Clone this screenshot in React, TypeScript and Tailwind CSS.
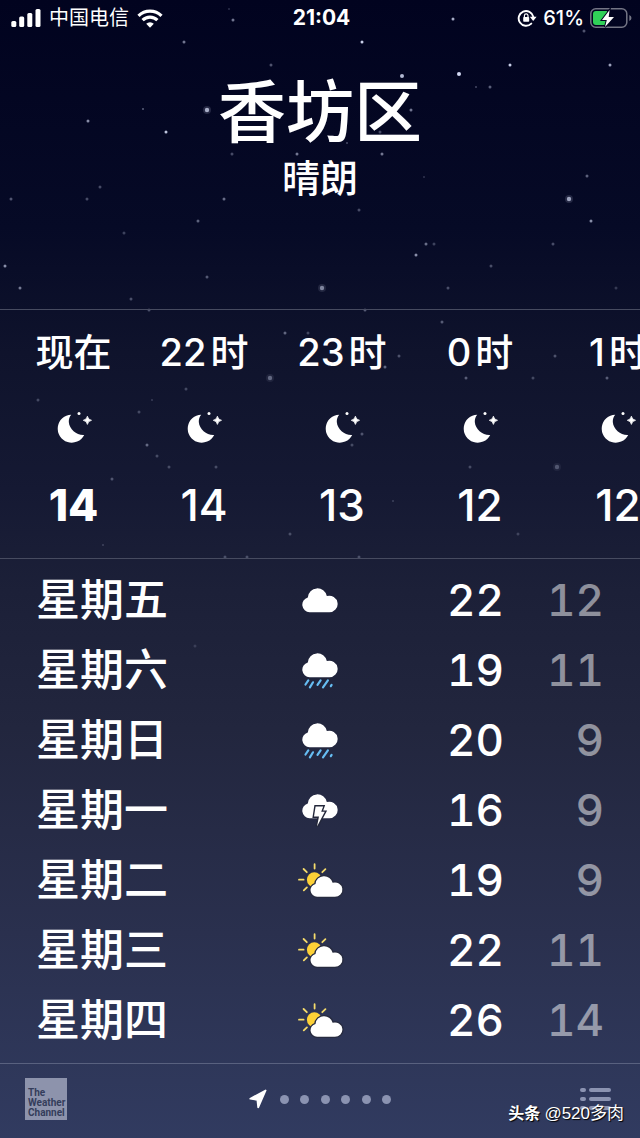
type Sky = "cloud" | "rain" | "storm" | "partly";

const hours = [
    { label: "现在", unit: "", temp: 14 },
    { label: "22", unit: "时", temp: 14 },
    { label: "23", unit: "时", temp: 13 },
    { label: "0", unit: "时", temp: 12 },
    { label: "1", unit: "时", temp: 12 },
];

const days: { name: string; sky: Sky; alt: string; high: number; low: number }[] = [
    { name: "星期五", sky: "cloud", alt: "多云", high: 22, low: 12 },
    { name: "星期六", sky: "rain", alt: "雨", high: 19, low: 11 },
    { name: "星期日", sky: "rain", alt: "雨", high: 20, low: 9 },
    { name: "星期一", sky: "storm", alt: "雷阵雨", high: 16, low: 9 },
    { name: "星期二", sky: "partly", alt: "晴间多云", high: 19, low: 9 },
    { name: "星期三", sky: "partly", alt: "晴间多云", high: 22, low: 11 },
    { name: "星期四", sky: "partly", alt: "晴间多云", high: 26, low: 14 },
];

// x, y, radius, opacity
const stars = [
    [229, 9, 1, 0.2], [233, 20, 1.5, 0.5], [453, 19, 1.5, 0.75], [584, 31, 1.5, 0.35],
    [184, 42, 1.5, 0.5], [362, 42, 1.5, 0.9], [271, 65, 1.5, 0.35], [510, 65, 1.5, 0.9],
    [610, 65, 1.5, 0.7], [459, 74, 2, 0.95], [402, 76, 2, 0.8], [476, 87, 1, 0.3],
    [490, 87, 1.5, 0.4], [143, 109, 1, 0.4], [411, 110, 1.5, 0.5], [88, 121, 1.5, 0.6],
    [166, 132, 1.5, 0.85], [380, 132, 1.5, 0.3], [347, 143, 1, 0.3], [232, 154, 1.5, 0.3],
    [297, 154, 1.5, 0.5], [382, 154, 1.5, 0.5], [424, 177, 1, 0.2], [587, 176, 1.5, 0.4],
    [100, 187, 1.5, 0.3], [11, 199, 1.5, 0.35], [87, 199, 1.5, 0.3], [224, 199, 1.5, 0.45],
    [359, 210, 1.5, 0.3], [198, 221, 1.5, 0.4], [591, 221, 1.5, 0.6], [124, 233, 1.5, 0.25],
    [426, 244, 1.5, 0.45], [434, 244, 1.5, 0.25], [553, 244, 1.5, 0.3], [416, 255, 1.5, 0.6],
    [5, 266, 1.5, 0.6], [491, 266, 1.5, 0.3], [207, 277, 1.5, 0.35], [20, 288, 1.5, 0.5],
    [448, 288, 1.5, 0.3], [616, 288, 1.5, 0.2], [131, 299, 1.5, 0.3], [149, 310, 1.5, 0.3],
    [365, 310, 1.5, 0.35], [442, 322, 1.5, 0.35], [285, 333, 1.5, 0.4], [308, 333, 1.5, 0.25],
    [399, 356, 1.5, 0.3], [555, 356, 1.5, 0.3], [385, 367, 1.5, 0.4], [466, 378, 1.5, 0.35],
    [533, 378, 1.5, 0.25], [607, 378, 1.5, 0.35], [186, 389, 1.5, 0.25], [38, 400, 1.5, 0.25],
    [152, 400, 1, 0.2], [139, 412, 1.5, 0.25], [362, 434, 1.5, 0.3], [352, 445, 1.5, 0.25],
    [147, 445, 1.5, 0.4], [157, 456, 1.5, 0.25], [169, 467, 1.5, 0.25], [216, 467, 1.5, 0.25],
    [470, 467, 1.5, 0.25], [112, 479, 1.5, 0.3], [393, 501, 1, 0.2], [290, 534, 1.5, 0.25],
    [518, 534, 1.5, 0.2], [103, 545, 1, 0.2], [225, 557, 1.5, 0.25], [247, 557, 1.5, 0.25],
    [359, 557, 1.5, 0.25], [195, 646, 1.5, 0.15],
];

const glowingStars = [
    [207, 110, 0.75], [569, 199, 0.7], [322, 288, 0.55], [270, 378, 0.4], [557, 467, 0.3],
];

const cloudPath =
    "M7.6 25.3 A7.6 7.6 0 0 1 5.8 10.4 A9.6 9.6 0 0 1 24.8 9.1 A8.3 8.3 0 1 1 27 25.3 Z";

function StarField() {
    return (
        <svg
            className="pointer-events-none absolute inset-0 h-full w-full"
            viewBox="0 0 640 1138"
            preserveAspectRatio="xMidYMin slice"
            fill="#dfe6ff"
            aria-hidden="true"
        >
            {stars.map(([x, y, r, o]) => (
                <circle key={`${x}-${y}`} cx={x} cy={y} r={r} opacity={o} />
            ))}
            {glowingStars.map(([x, y, o]) => (
                <g key={`${x}-${y}`} opacity={o}>
                    <circle cx={x} cy={y} r="4" opacity="0.2" />
                    <circle cx={x} cy={y} r="2.2" />
                </g>
            ))}
        </svg>
    );
}

function MoonIcon() {
    return (
        <svg width="32" height="32" viewBox="0 0 32 32" fill="#fff" className="overflow-visible" aria-hidden="true">
            <path d="M13.2 3.7 A14 14 0 1 0 26.2 24 C19 24.6 11.4 18.6 10.8 11 C10.700 8.200 11.600 5.700 13.200 3.700 Z" />
            <path d="M29.400 5.200 Q30 8.700 33.500 9.300 Q30 9.900 29.400 13.400 Q28.800 9.900 25.300 9.300 Q28.800 8.700 29.400 5.200 Z" stroke="#fff" strokeWidth="0.8" />
            <circle cx="21" cy="2.400" r="1.500" />
        </svg>
    );
}

function SkyIcon({ sky, alt }: { sky: Sky; alt: string }) {
    if (sky === "partly") {
        return (
            <svg width="44" height="34" viewBox="0 0 44 34" role="img" aria-label={alt} className="overflow-visible">
                <circle cx="16.3" cy="16.7" r="7.4" fill="#fdd137" />
                <path
                    d="M16.6 1.200V5.600M1 16.700H5.600M5.600 6L8.800 9.200M27.400 6.200L24.300 9.200M5.800 27.400L8.900 24.400"
                    stroke="#f5dc6b"
                    strokeWidth="1.800"
                    strokeLinecap="round"
                />
                <g transform="translate(12.3 12) scale(0.9 0.86)">
                    <path d={cloudPath} fill="#fff" stroke="#272b3f" strokeWidth="3" />
                    <path d={cloudPath} fill="#fff" />
                </g>
            </svg>
        );
    }
    const height = { cloud: 26, rain: 37, storm: 34 }[sky];
    return (
        <svg width="36" height={height} viewBox={`0 0 36 ${height}`} role="img" aria-label={alt}>
            <path d={cloudPath} fill="#fff" />
            {sky === "rain" && (
                <path
                    d="M6.3 28.3L3.500 32.500M11 30.300L7.900 35.400M18.600 28.300L15.500 32.800M25.900 28.300L21 35.400M29.600 32.900L28.800 34.200"
                    stroke="#66bdf2"
                    strokeWidth="2.200"
                    strokeLinecap="round"
                />
            )}
            {sky === "storm" && (
                <path
                    d="M13.600 13.400H21.200L19.200 18.800H22.800L15 33.400L17 23.600H12Z"
                    fill="#fff"
                    stroke="#23273a"
                    strokeWidth="2.800"
                    paintOrder="stroke"
                />
            )}
        </svg>
    );
}

function StatusBar() {
    return (
        <div className="grid h-9 grid-cols-3 items-center pr-2 pl-[11px] text-xl leading-5">
            <div className="flex items-center gap-2">
                <svg width="30" height="18" viewBox="0 0 30 18" fill="#fff" aria-hidden="true">
                    <rect x="0.300" y="12" width="5" height="6" rx="1.500" />
                    <rect x="8.200" y="7.500" width="5" height="10.500" rx="1.500" />
                    <rect x="16.300" y="4" width="5" height="14" rx="1.500" />
                    <rect x="24.500" y="0" width="5" height="18" rx="1.500" />
                </svg>
                <span>中国电信</span>
                <svg width="26" height="19" viewBox="0 0 26 19" fill="none" stroke="#fff" strokeWidth="3.200" aria-hidden="true">
                    <path d="M1.500 6.800 A16.500 16.500 0 0 1 24.500 6.800" />
                    <path d="M5.600 11.200 A10.500 10.500 0 0 1 20.400 11.200" />
                    <path d="M13 18.800 L9.200 14.700 A5.400 5.400 0 0 1 16.800 14.700 Z" fill="#fff" stroke="none" />
                </svg>
            </div>
            <div className="text-center text-[21px] leading-5 font-bold">21:04</div>
            <div className="flex items-center justify-end gap-[6px]">
                <svg width="20" height="18" viewBox="0 0 20 18" fill="none" aria-hidden="true">
                    <path d="M14.300 14.600 A7.400 7.400 0 1 1 16.300 7.800" stroke="#fff" strokeWidth="1.900" strokeLinecap="round" />
                    <path d="M12.800 7.800H19.600L16.200 12Z" fill="#fff" />
                    <rect x="6.200" y="8" width="6" height="4.800" rx="0.800" fill="#fff" />
                    <path d="M7.400 8.200V6.700a1.800 1.800 0 0 1 3.600 0v1.500" stroke="#fff" strokeWidth="1.200" />
                </svg>
                <span className="font-medium">61%</span>
                <svg width="42" height="20" viewBox="0 0 42 20" aria-hidden="true">
                    <rect x="0.800" y="0.800" width="36" height="18.400" rx="5" fill="none" stroke="#fff" strokeOpacity="0.45" strokeWidth="1.500" />
                    <path d="M39.300 7Q41.500 8 41.500 10T39.300 13Z" fill="#fff" fillOpacity="0.450" />
                    <path d="M6 3H17V17H6Q3 17 3 14V6Q3 3 6 3Z" fill="#30d158" />
                    <path
                        d="M19.600 2L12 12H16.800L15 19L24 9H18.700Z"
                        fill="#fff"
                        stroke="#03051f"
                        strokeWidth="2"
                        paintOrder="stroke"
                    />
                </svg>
            </div>
        </div>
    );
}

export default function App() {
    return (
        <div className="relative flex min-h-screen flex-col overflow-hidden bg-[linear-gradient(180deg,#01031f_0%,#060a26_20%,#0f132c_31%,#151933_43%,#1c2038_52%,#22263e_64%,#2a304e_82%,#313b60_100%)] font-['Inter','Noto_Sans_CJK_SC',sans-serif] text-white">
            <StarField />

            <div className="relative flex flex-1 flex-col">
                <StatusBar />

                <header className="flex h-[273px] flex-col items-center pt-[38px] text-center font-medium">
                    <h1 className="text-[68px] leading-[76px]">香坊区</h1>
                    <p className="text-[38px] leading-14">晴朗</p>
                </header>

                {/* Hourly forecast */}
                <section className="flex h-[250px] overflow-hidden border-y border-[#474b60]">
                    {hours.map((hour, i) => (
                        <div
                            key={hour.label}
                            className={`flex shrink-0 flex-col items-center pt-4 ${i === 0 ? "w-[135px] pl-3" : "w-[138px]"}`}
                        >
                            <div className="flex gap-1 text-[38px] leading-[52px] font-medium">
                                <span>{hour.label}</span>
                                {hour.unit && <span>{hour.unit}</span>}
                            </div>
                            <div className="mt-[33px]">
                                <MoonIcon />
                            </div>
                            <div className={`mt-9 text-[44px] leading-[52px] ${i === 0 ? "font-extrabold" : "font-medium"}`}>
                                {hour.temp}
                            </div>
                        </div>
                    ))}
                </section>

                {/* Daily forecast */}
                <ul className="px-9 pt-[6px] pb-2 text-[44px] leading-[52px] font-medium">
                    {days.map((day) => (
                        <li key={day.name} className="grid h-[70px] grid-cols-[1fr_44px_1fr] items-center">
                            <span>{day.name}</span>
                            <span className="flex justify-center">
                                <SkyIcon sky={day.sky} alt={day.alt} />
                            </span>
                            <span className="flex justify-end tabular-nums">
                                <span>{day.high}</span>
                                <span className="w-[100px] text-right text-white/50">{day.low}</span>
                            </span>
                        </li>
                    ))}
                </ul>

                <footer className="mt-auto grid h-[75px] grid-cols-[1fr_auto_1fr] items-center border-t border-[#59617f] px-[25px] pb-1">
                    <a
                        href="#weather-channel"
                        className="flex size-[42px] flex-col justify-end bg-[#8d93ac] pb-[2px] pl-[3px] font-['Roboto',sans-serif] text-[10px] leading-[10px] font-bold text-[#343d5b]"
                    >
                        <span>The</span>
                        <span>Weather</span>
                        <span>Channel</span>
                    </a>
                    <nav className="flex items-center gap-[13px]">
                        <button type="button" aria-label="当前位置">
                            <svg width="18" height="20" viewBox="0 0 18 20" aria-hidden="true">
                                <path d="M16.600 1.500L1.300 9.700L8.400 10.900L9.200 18.300Z" fill="#fff" stroke="#fff" strokeWidth="1.800" strokeLinejoin="round" />
                            </svg>
                        </button>
                        <div className="flex w-[112px] justify-between">
                            {[1, 2, 3, 4, 5, 6].map((page) => (
                                <button key={page} type="button" aria-label={`城市 ${page}`} className="size-[9px] rounded-full bg-[#8b93b1]" />
                            ))}
                        </div>
                    </nav>
                    <button type="button" aria-label="城市列表" className="mr-1 justify-self-end">
                        <svg width="31" height="22" viewBox="0 0 31 22" fill="#8b93b1" aria-hidden="true">
                            {[0, 9, 18].map((y) => (
                                <g key={y}>
                                    <rect x="0" y={y} width="6" height="4" rx="2" />
                                    <rect x="9" y={y} width="22" height="4" rx="2" />
                                </g>
                            ))}
                        </svg>
                    </button>
                </footer>
            </div>

            <div className="absolute right-4 bottom-3 flex items-center gap-1 font-['Liberation_Sans','Noto_Sans_CJK_SC',sans-serif] text-[17px] leading-6 [text-shadow:1px_1px_1px_#000]">
                <span className="text-base leading-6 font-bold">头条</span>
                <span>@520多肉</span>
            </div>
        </div>
    );
}
